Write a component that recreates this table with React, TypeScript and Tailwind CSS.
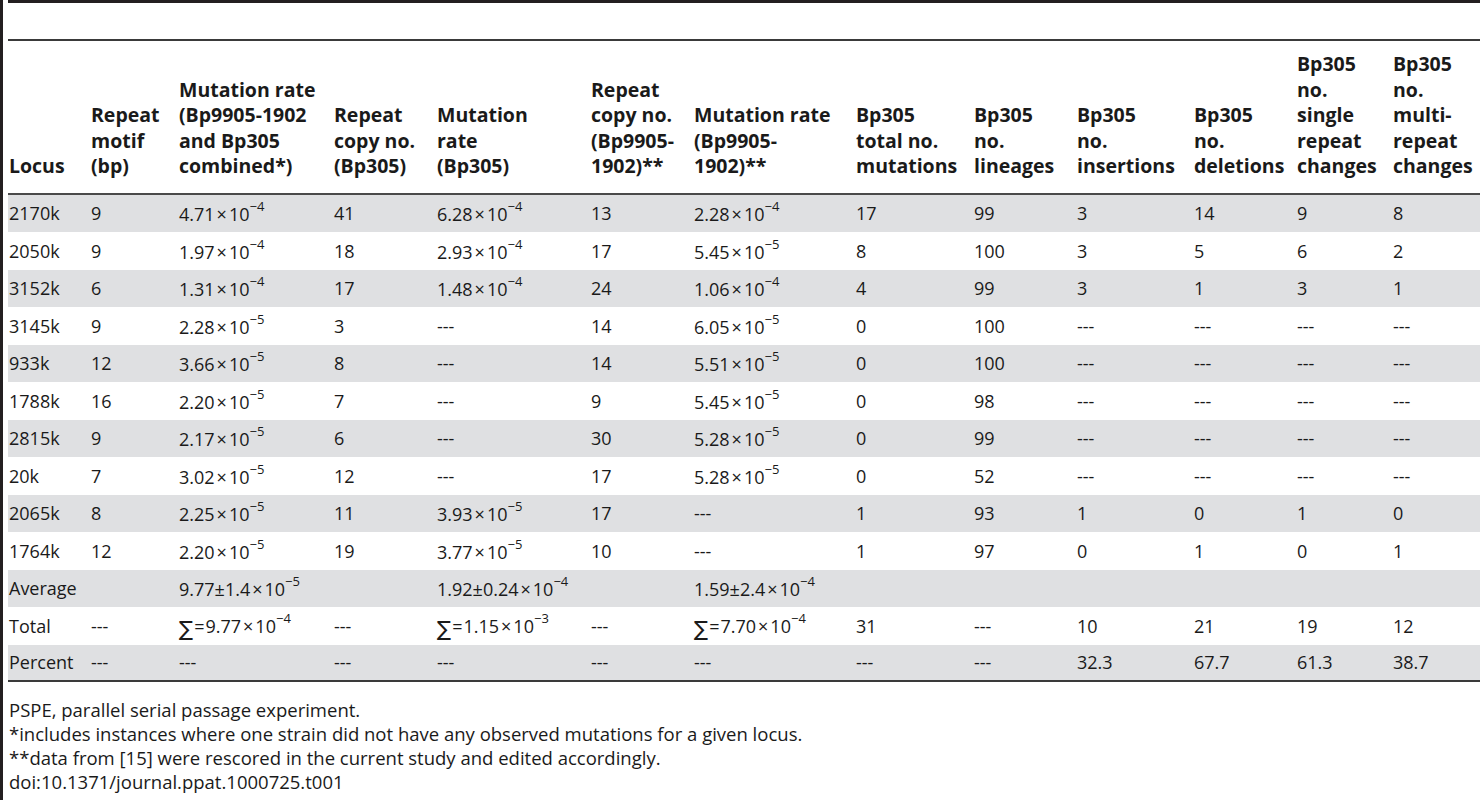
import React from 'react';

type Cell = React.ReactNode;

const widths = [82, 88, 155, 103, 154, 103, 162, 118, 103, 117, 103, 96, 88];

const headers: string[][] = [
    ['Locus'],
    ['Repeat', 'motif', '(bp)'],
    ['Mutation rate', '(Bp9905-1902', 'and Bp305', 'combined*)'],
    ['Repeat', 'copy no.', '(Bp305)'],
    ['Mutation', 'rate', '(Bp305)'],
    ['Repeat', 'copy no.', '(Bp9905-', '1902)**'],
    ['Mutation rate', '(Bp9905-', '1902)**'],
    ['Bp305', 'total no.', 'mutations'],
    ['Bp305', 'no.', 'lineages'],
    ['Bp305', 'no.', 'insertions'],
    ['Bp305', 'no.', 'deletions'],
    ['Bp305', 'no.', 'single', 'repeat', 'changes'],
    ['Bp305', 'no.', 'multi-', 'repeat', 'changes'],
];

function Sci({ m, e }: { m: string; e: string }) {
    return (
        <span>
            {m}
            <span className="mx-[2px]">×</span>
            10
            <span className="text-[13px] align-[10px] leading-none">−{e}</span>
        </span>
    );
}

function Sum({ m, e }: { m: string; e: string }) {
    return (
        <span>
            <span className="text-[21px] align-[-3px] leading-none" style={{ fontFamily: '"DejaVu Sans", sans-serif' }}>∑</span>
            <span className="mx-[1px]">=</span>
            <Sci m={m} e={e} />
        </span>
    );
}

const D = '---';

const rows: Cell[][] = [
    ['2170k', '9', <Sci m="4.71" e="4" />, '41', <Sci m="6.28" e="4" />, '13', <Sci m="2.28" e="4" />, '17', '99', '3', '14', '9', '8'],
    ['2050k', '9', <Sci m="1.97" e="4" />, '18', <Sci m="2.93" e="4" />, '17', <Sci m="5.45" e="5" />, '8', '100', '3', '5', '6', '2'],
    ['3152k', '6', <Sci m="1.31" e="4" />, '17', <Sci m="1.48" e="4" />, '24', <Sci m="1.06" e="4" />, '4', '99', '3', '1', '3', '1'],
    ['3145k', '9', <Sci m="2.28" e="5" />, '3', D, '14', <Sci m="6.05" e="5" />, '0', '100', D, D, D, D],
    ['933k', '12', <Sci m="3.66" e="5" />, '8', D, '14', <Sci m="5.51" e="5" />, '0', '100', D, D, D, D],
    ['1788k', '16', <Sci m="2.20" e="5" />, '7', D, '9', <Sci m="5.45" e="5" />, '0', '98', D, D, D, D],
    ['2815k', '9', <Sci m="2.17" e="5" />, '6', D, '30', <Sci m="5.28" e="5" />, '0', '99', D, D, D, D],
    ['20k', '7', <Sci m="3.02" e="5" />, '12', D, '17', <Sci m="5.28" e="5" />, '0', '52', D, D, D, D],
    ['2065k', '8', <Sci m="2.25" e="5" />, '11', <Sci m="3.93" e="5" />, '17', D, '1', '93', '1', '0', '1', '0'],
    ['1764k', '12', <Sci m="2.20" e="5" />, '19', <Sci m="3.77" e="5" />, '10', D, '1', '97', '0', '1', '0', '1'],
];

function App() {
    const cell = 'pl-px whitespace-nowrap align-middle';
    return (
        <div className="flex min-h-[800px] bg-white text-[#1a1a1a] text-[18px]" style={{ fontFamily: '"Open Sans", sans-serif' }}>
            <div className="w-[3px] bg-[#231f20]"></div>
            <div className="flex-1 pl-[5px]">
                <div className="h-[3px] bg-[#231f20]"></div>
                <div className="mt-[36px] border-t-2 border-[#3a3a3a]">
                    <table className="table-fixed border-separate border-spacing-0 w-[1472px]">
                        <colgroup>
                            {widths.map((w, i) => (
                                <col key={i} style={{ width: w }} />
                            ))}
                        </colgroup>
                        <thead>
                            <tr>
                                {headers.map((h, i) => (
                                    <th key={i} className="pl-px pt-[10px] pb-[14px] text-left align-bottom text-[19.5px] font-bold leading-[25.5px] whitespace-nowrap border-b-2 border-[#4a4a4a]">
                                        {h.map((line, j) => (
                                            <div key={j}>{line}</div>
                                        ))}
                                    </th>
                                ))}
                            </tr>
                        </thead>
                        <tbody className="leading-[24px]">
                            {rows.map((r, i) => (
                                <tr key={i} className={`h-[37.5px] ${i % 2 === 0 ? 'bg-[#dfe0e2]' : 'bg-white'}`}>
                                    {r.map((c, j) => (
                                        <td key={j} className={cell}>{c}</td>
                                    ))}
                                </tr>
                            ))}
                            <tr className="h-[37.5px] bg-[#dfe0e2]">
                                <td colSpan={2} className={cell}>Average</td>
                                <td className={cell}><Sci m="9.77±1.4" e="5" /></td>
                                <td className={cell}></td>
                                <td className={cell}><Sci m="1.92±0.24" e="4" /></td>
                                <td className={cell}></td>
                                <td className={cell}><Sci m="1.59±2.4" e="4" /></td>
                                <td className={cell}></td>
                                <td className={cell}></td>
                                <td className={cell}></td>
                                <td className={cell}></td>
                                <td className={cell}></td>
                                <td className={cell}></td>
                            </tr>
                            <tr className="h-[37.5px] bg-white">
                                <td className={cell}>Total</td>
                                <td className={cell}>{D}</td>
                                <td className={cell}><Sum m="9.77" e="4" /></td>
                                <td className={cell}>{D}</td>
                                <td className={cell}><Sum m="1.15" e="3" /></td>
                                <td className={cell}>{D}</td>
                                <td className={cell}><Sum m="7.70" e="4" /></td>
                                <td className={cell}>31</td>
                                <td className={cell}>{D}</td>
                                <td className={cell}>10</td>
                                <td className={cell}>21</td>
                                <td className={cell}>19</td>
                                <td className={cell}>12</td>
                            </tr>
                            <tr className="h-[37.5px] bg-[#dfe0e2]">
                                {['Percent', D, D, D, D, D, D, D, D, '32.3', '67.7', '61.3', '38.7'].map((c, j) => (
                                    <td key={j} className={`${cell} border-b-2 border-[#3a3a3a]`}>{c}</td>
                                ))}
                            </tr>
                        </tbody>
                    </table>
                </div>
                <div className="mt-[16px] pl-px leading-[24px] text-[18.5px]">
                    <div>PSPE, parallel serial passage experiment.</div>
                    <div>*includes instances where one strain did not have any observed mutations for a given locus.</div>
                    <div>**data from [15] were rescored in the current study and edited accordingly.</div>
                    <div>doi:10.1371/journal.ppat.1000725.t001</div>
                </div>
            </div>
        </div>
    );
}

export default App;
